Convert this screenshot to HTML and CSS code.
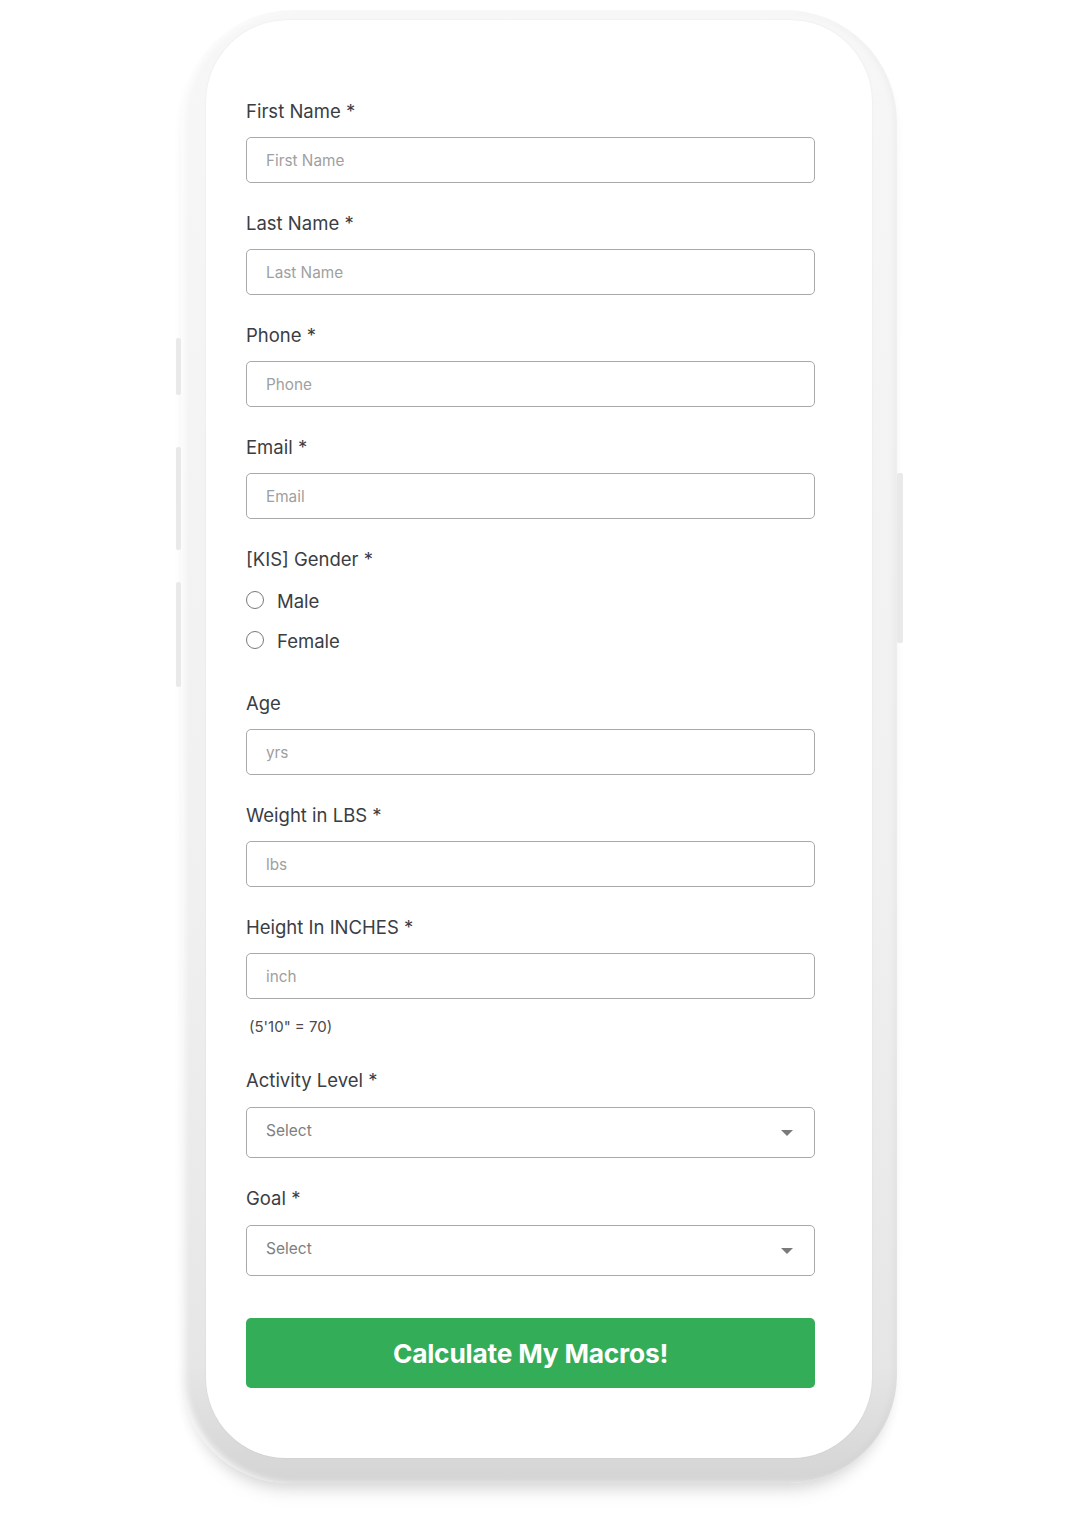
FILE: index.html
```html
<!DOCTYPE html>
<html>
  <head>
    <meta charset="utf-8">
    <title>Macro Calculator</title>
    <link rel="stylesheet" href="styles.css">
  </head>
  <body>
    <div class="stage">
      <div class="phone">
        <span class="side-btn side-left btn-1"></span>
        <span class="side-btn side-left btn-2"></span>
        <span class="side-btn side-left btn-3"></span>
        <span class="side-btn side-right btn-4"></span>

        <div class="screen">
          <form class="macro-form">
            <div class="field">
              <label>First Name *</label>
              <input type="text" placeholder="First Name">
            </div>
            <div class="field">
              <label>Last Name *</label>
              <input type="text" placeholder="Last Name">
            </div>
            <div class="field">
              <label>Phone *</label>
              <input type="text" placeholder="Phone">
            </div>
            <div class="field">
              <label>Email *</label>
              <input type="text" placeholder="Email">
            </div>
            <div class="field field-radio">
              <label>[KIS] Gender *</label>
              <div class="radio-row"><input type="radio" name="gender"><span>Male</span></div>
              <div class="radio-row"><input type="radio" name="gender"><span>Female</span></div>
            </div>
            <div class="field">
              <label>Age</label>
              <input type="text" placeholder="yrs">
            </div>
            <div class="field">
              <label>Weight in LBS *</label>
              <input type="text" placeholder="lbs">
            </div>
            <div class="field field-note">
              <label>Height In INCHES *</label>
              <input type="text" placeholder="inch">
              <p class="note">(5'10" = 70)</p>
            </div>
            <div class="field">
              <label class="label-select">Activity Level *</label>
              <div class="select-wrap">
                <select><option>Select</option></select>
              </div>
            </div>
            <div class="field">
              <label class="label-select">Goal *</label>
              <div class="select-wrap">
                <select><option>Select</option></select>
              </div>
            </div>
            <button type="button" class="submit">Calculate My Macros!</button>
          </form>
        </div>
      </div>
    </div>
  </body>
</html>
```

FILE: styles.css
```css
body {
  margin: 0;
  background: #fff;
  font-family: Inter, "Noto Sans", Arial, sans-serif;
  color: #3a3d43;
}

.stage {
  display: flex;
  justify-content: center;
  padding-top: 10px;
  padding-right: 2px;
  height: 1510px;
}

.phone {
  position: relative;
  width: 716px;
  height: 1473px;
  box-sizing: border-box;
  padding: 10px 25px 25px 25px;
  border-radius: 112px 112px 108px 108px;
  background: linear-gradient(to bottom, #f7f7f7 0%, #f0f0f0 60%, #e6e6e6 92%, #d4d4d4 100%);
  box-shadow:
    inset 4px 0 6px rgba(255, 255, 255, 0.8),
    inset -4px 0 6px rgba(0, 0, 0, 0.03),
    0 10px 14px -6px rgba(0, 0, 0, 0.12),
    0 24px 20px -14px rgba(0, 0, 0, 0.06);
}

.side-btn {
  position: absolute;
  width: 5px;
  background: #e9e9e9;
  border-radius: 2px;
}

.side-left { left: -5px; }
.side-right { right: -6px; width: 6px; }
.btn-1 { top: 328px; height: 57px; }
.btn-2 { top: 437px; height: 103px; }
.btn-3 { top: 572px; height: 105px; }
.btn-4 { top: 463px; height: 170px; }

.screen {
  height: 100%;
  background: #fff;
  border-radius: 82px 82px 80px 80px;
  box-shadow: 0 0 2px rgba(0, 0, 0, 0.08);
  box-sizing: border-box;
  padding: 79px 57px 0 40px;
}

.macro-form {
  display: flex;
  flex-direction: column;
}

.field {
  display: flex;
  flex-direction: column;
  margin-bottom: 28px;
}

.field label {
  font-size: 18.5px;
  line-height: 24px;
  margin-bottom: 14px;
  color: #3a3d43;
}

.field input[type="text"] {
  height: 46px;
  box-sizing: border-box;
  border: 1px solid #a9a9a9;
  border-radius: 5px;
  padding: 0 19px;
  font-family: inherit;
  font-size: 15.3px;
  color: #333;
}

.field input::placeholder {
  color: #a0a0a0;
}

.field-radio {
  margin-bottom: 38px;
}

.field-radio label {
  margin-bottom: 18px;
}

.radio-row {
  display: flex;
  align-items: center;
  height: 24px;
  margin-bottom: 16px;
  font-size: 18.5px;
  color: #3a3d43;
}

.radio-row:last-child {
  margin-bottom: 0;
}

.radio-row input {
  appearance: none;
  width: 18px;
  height: 18px;
  margin: -3px 13px 0 0;
  border: 1.5px solid #7a7a7a;
  border-radius: 50%;
  box-sizing: border-box;
}

.note {
  margin: 18px 0 0 3px;
  font-size: 15px;
  line-height: 20px;
  color: #4a4a4a;
}

.field-note {
  margin-bottom: 31px;
}

.field label.label-select {
  margin-bottom: 15px;
}

.select-wrap {
  position: relative;
}

.select-wrap select {
  width: 100%;
  height: 51px;
  appearance: none;
  border: 1px solid #a9a9a9;
  border-radius: 5px;
  background: #fff;
  padding: 0 19px 5px;
  font-family: inherit;
  font-size: 15.5px;
  color: #808080;
}

.select-wrap::after {
  content: "";
  position: absolute;
  right: 22px;
  top: 23px;
  border-left: 6px solid transparent;
  border-right: 6px solid transparent;
  border-top: 6px solid #7a7a7a;
}

.submit {
  margin-top: 14px;
  height: 70px;
  border: none;
  border-radius: 5px;
  background: #33ad57;
  color: #fff;
  font-family: inherit;
  font-size: 26.3px;
  font-weight: 700;
  letter-spacing: -0.2px;
}
```
